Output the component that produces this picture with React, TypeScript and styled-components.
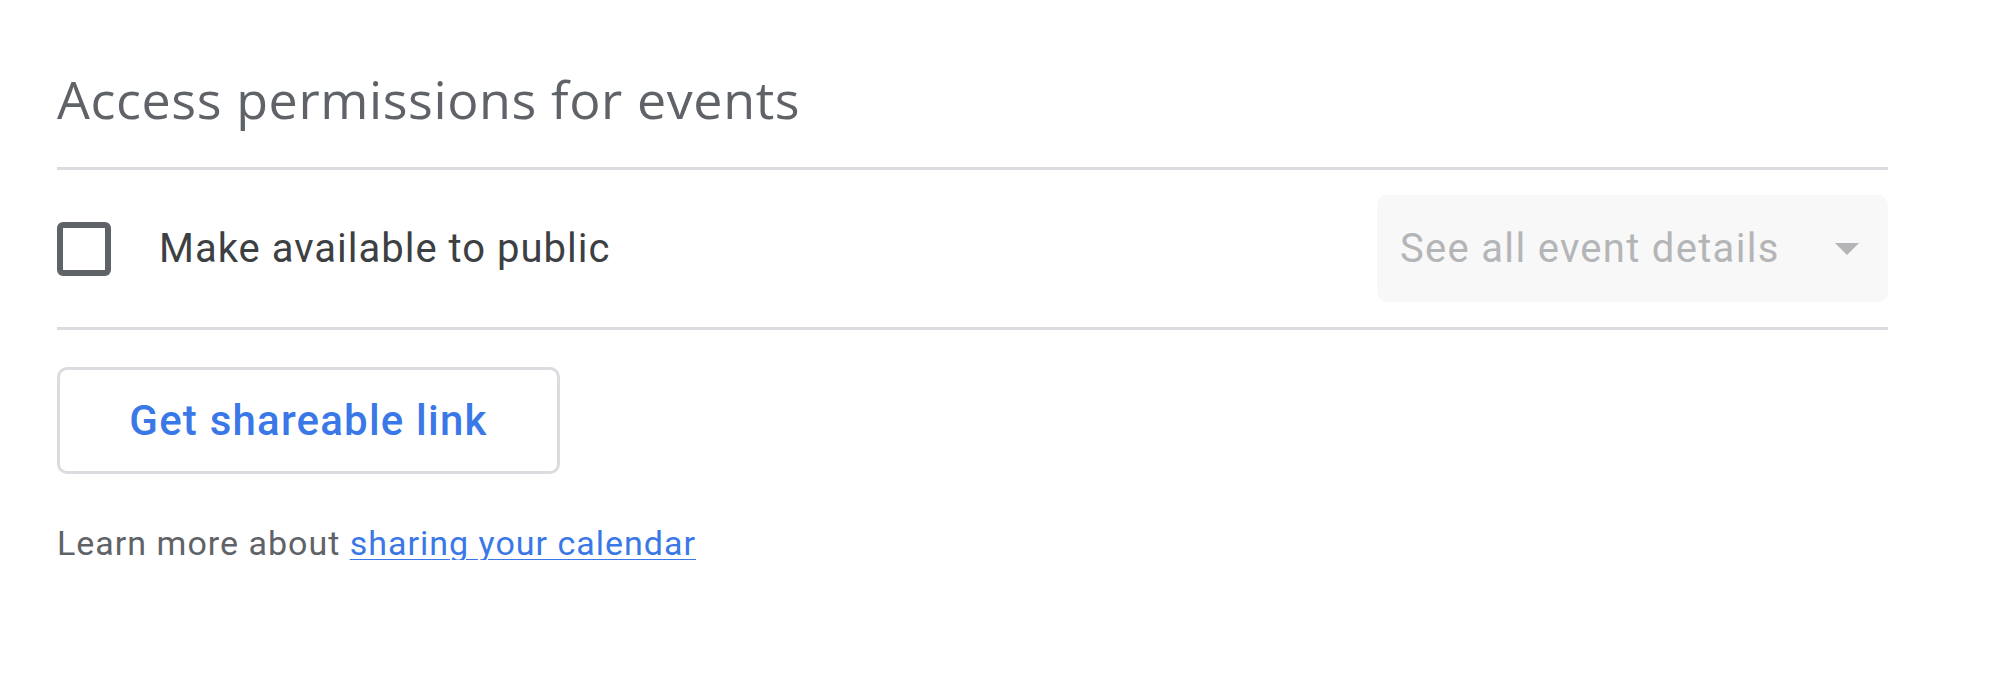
import styled, { createGlobalStyle } from 'styled-components'

const GlobalStyle = createGlobalStyle`
  html, body {
    margin: 0;
    padding: 0;
    background: #ffffff;
  }
  body {
    font-family: Roboto, "Liberation Sans", sans-serif;
  }
`

function App() {
  return (
    <>
      <GlobalStyle />
      <Panel>
        <Title>Access permissions for events</Title>
        <Divider />
        <PermissionRow>
          <CheckLabel>
            <CheckBox type="checkbox" />
            <LabelText>Make available to public</LabelText>
          </CheckLabel>
          <Select disabled>
            <SelectText>See all event details</SelectText>
            <Caret viewBox="0 0 24 12" aria-hidden="true">
              <path d="M0 0 L24 0 L12 12 Z" fill="currentColor" />
            </Caret>
          </Select>
        </PermissionRow>
        <Divider />
        <OutlineButton type="button">Get shareable link</OutlineButton>
        <HelpText>
          Learn more about <HelpLink href="#">sharing your calendar</HelpLink>
        </HelpText>
      </Panel>
    </>
  )
}

const Panel = styled.div`
  display: flex;
  flex-direction: column;
  align-items: flex-start;
  width: 1831px;
  padding: 73px 0 0 57px;
`

const Title = styled.h2`
  margin: 0 0 42px;
  font-family: "Open Sans", Roboto, sans-serif;
  font-size: 52px;
  font-weight: 400;
  line-height: 52px;
  color: #5f6368;
  letter-spacing: 0.6px;
`

const Divider = styled.div`
  align-self: stretch;
  height: 3px;
  background: #dadce0;
`

const PermissionRow = styled.div`
  align-self: stretch;
  height: 157px;
  display: flex;
  align-items: center;
  justify-content: space-between;
`

const CheckLabel = styled.label`
  display: flex;
  align-items: center;
  gap: 48px;
  cursor: pointer;
`

const CheckBox = styled.input`
  appearance: none;
  margin: 0;
  width: 54px;
  height: 54px;
  box-sizing: border-box;
  border: 6px solid #5f6368;
  border-radius: 6px;
  background: #fff;
  cursor: pointer;
`

const LabelText = styled.span`
  font-size: 40px;
  line-height: 40px;
  letter-spacing: 1px;
  color: #3c4043;
`

const Select = styled.button`
  display: flex;
  align-items: center;
  justify-content: space-between;
  width: 511px;
  height: 107px;
  box-sizing: border-box;
  padding: 0 29px 0 23px;
  border: none;
  border-radius: 10px;
  background: #f8f8f8;
  font-family: Roboto, sans-serif;
  color: #b4b5b7;
`

const SelectText = styled.span`
  font-size: 40px;
  line-height: 40px;
  letter-spacing: 1.3px;
`

const Caret = styled.svg`
  width: 24px;
  height: 12px;
  color: #b4b5b7;
`

const OutlineButton = styled.button`
  margin-top: 37px;
  width: 503px;
  height: 107px;
  box-sizing: border-box;
  border: 3px solid #dadce0;
  border-radius: 10px;
  background: #fff;
  font-family: Roboto, sans-serif;
  font-size: 42px;
  font-weight: 500;
  letter-spacing: 1.2px;
  color: #3b78e7;
  cursor: pointer;
`

const HelpText = styled.p`
  margin: 52px 0 0;
  font-size: 34px;
  line-height: 34px;
  letter-spacing: 1px;
  color: #5f6368;
`

const HelpLink = styled.a`
  color: #3b78e7;
  text-decoration: underline;
  text-decoration-thickness: 2px;
  text-underline-offset: 4px;
`

export default App
